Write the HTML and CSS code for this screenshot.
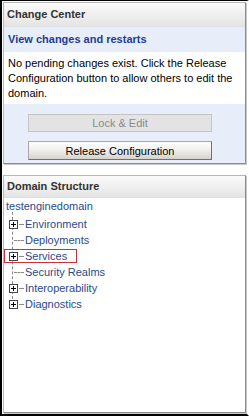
FILE: index.html
```html
<!DOCTYPE html>
<html lang="en">
<head>
  <meta charset="UTF-8">
  <title>Change Center</title>
  <link rel="stylesheet" href="styles.css">
</head>
<body>
  <div class="frame">
    <div class="panel change-center">
      <div class="panel-head">Change Center</div>
      <div class="panel-link"><a href="#">View changes and restarts</a></div>
      <div class="message">
        No pending changes exist. Click the Release Configuration button to allow others to edit the domain.
      </div>
      <div class="buttons">
        <button class="btn" disabled>Lock &amp; Edit</button>
        <button class="btn">Release Configuration</button>
      </div>
    </div>

    <div class="panel domain">
      <div class="panel-head">Domain Structure</div>
      <div class="tree">
        <a class="root" href="#">testenginedomain</a>
        <ul>
          <li><span class="plus"><svg width="9" height="9" viewBox="0 0 9 9"><rect x="0.5" y="0.5" width="8" height="8" fill="#fff" stroke="#444"/><path d="M2 4.5h5M4.5 2v5" stroke="#000"/></svg></span><a href="#">Environment</a></li>
          <li><span class="leaf"></span><a href="#">Deployments</a></li>
          <li class="selected"><span class="plus"><svg width="9" height="9" viewBox="0 0 9 9"><rect x="0.5" y="0.5" width="8" height="8" fill="#fff" stroke="#444"/><path d="M2 4.5h5M4.5 2v5" stroke="#000"/></svg></span><a href="#">Services</a></li>
          <li><span class="leaf"></span><a href="#">Security Realms</a></li>
          <li><span class="plus"><svg width="9" height="9" viewBox="0 0 9 9"><rect x="0.5" y="0.5" width="8" height="8" fill="#fff" stroke="#444"/><path d="M2 4.5h5M4.5 2v5" stroke="#000"/></svg></span><a href="#">Interoperability</a></li>
          <li class="last"><span class="plus"><svg width="9" height="9" viewBox="0 0 9 9"><rect x="0.5" y="0.5" width="8" height="8" fill="#fff" stroke="#444"/><path d="M2 4.5h5M4.5 2v5" stroke="#000"/></svg></span><a href="#">Diagnostics</a></li>
        </ul>
      </div>
    </div>
  </div>
</body>
</html>
```

FILE: styles.css
```css
html, body {
  margin: 0;
  padding: 0;
  background: #fff;
}

body {
  font-family: "Liberation Sans", Arial, sans-serif;
  font-size: 11px;
  color: #000;
}

.frame {
  width: 249px;
  height: 416px;
  box-sizing: border-box;
  border-top: 1px solid #000;
  border-left: 2px solid #000;
  border-bottom: 2px solid #000;
  border-right: 2px solid #fff;
  padding: 1px 1px 0 1px;
  display: flex;
  flex-direction: column;
  gap: 11px;
}

.panel {
  border: 1px solid #b8b8b8;
  border-right-color: #8c8c8c;
  border-bottom-color: #8c8c8c;
  box-shadow: 1px 1px 0 #c8c8c8;
}

.panel-head {
  height: 23px;
  line-height: 22px;
  padding-left: 3px;
  font-weight: bold;
  color: #333;
  background: linear-gradient(#fbfbfb, #e4e4e4);
  border-bottom: 1px solid #e0e0e0;
}

.change-center {
  background: #e8eef9;
}

.panel-link {
  height: 25px;
  line-height: 24px;
  padding-left: 4px;
}

.panel-link a {
  color: #1f3d91;
  font-weight: bold;
  text-decoration: none;
}

.message {
  background: #fff;
  padding: 4px 4px 3px 4px;
  line-height: 15px;
}

.buttons {
  display: flex;
  flex-direction: column;
  align-items: flex-start;
  gap: 9px;
  padding: 10px 0 3px 24px;
}

.btn {
  width: 184px;
  height: 19px;
  font-family: inherit;
  font-size: 11px;
  color: #000;
  border: 1px solid #a8a8a8;
  border-right-color: #707070;
  border-bottom-color: #707070;
  background: linear-gradient(#fdfdfd, #f2f1ee 45%, #d6d2ca);
  padding: 0;
}

.btn:disabled {
  height: 18px;
  color: #8a8a8a;
  background: #e3e3e3;
  border-color: #c4c4c4;
}

.domain {
  flex: 1;
  background: #fff;
  margin-bottom: 1px;
}

.domain .panel-head {
  height: 21px;
  line-height: 20px;
}

.tree {
  line-height: 16px;
}

.tree .root {
  display: block;
  padding-left: 2px;
}

.tree a {
  color: #2a4a8c;
  text-decoration: none;
}

.tree ul {
  list-style: none;
  margin: 2px 0 0 0;
  padding: 0;
  position: relative;
}

.tree ul::before {
  content: "";
  position: absolute;
  left: 8px;
  top: -4px;
  height: 92px;
  border-left: 1px dashed #8a8a8a;
}

.tree li {
  position: relative;
  height: 16px;
  padding: 0 10px 0 21px;
  width: fit-content;
}

.leaf {
  position: absolute;
  left: 10px;
  top: 8px;
  width: 10px;
  border-top: 1px dashed #8a8a8a;
}

.plus {
  position: absolute;
  left: 5px;
  top: 4px;
  width: 16px;
  height: 9px;
  display: flex;
  align-items: center;
}

.plus::after {
  content: "";
  width: 5px;
  border-top: 1px dashed #8a8a8a;
  margin-left: 1px;
}

.plus svg {
  display: block;
}

.tree li.selected {
  box-shadow: inset 0 0 0 1px #c8323c;
  height: 14px;
  line-height: 14px;
  margin: 1px 0;
}

.tree li.selected .plus {
  top: 3px;
}
```
